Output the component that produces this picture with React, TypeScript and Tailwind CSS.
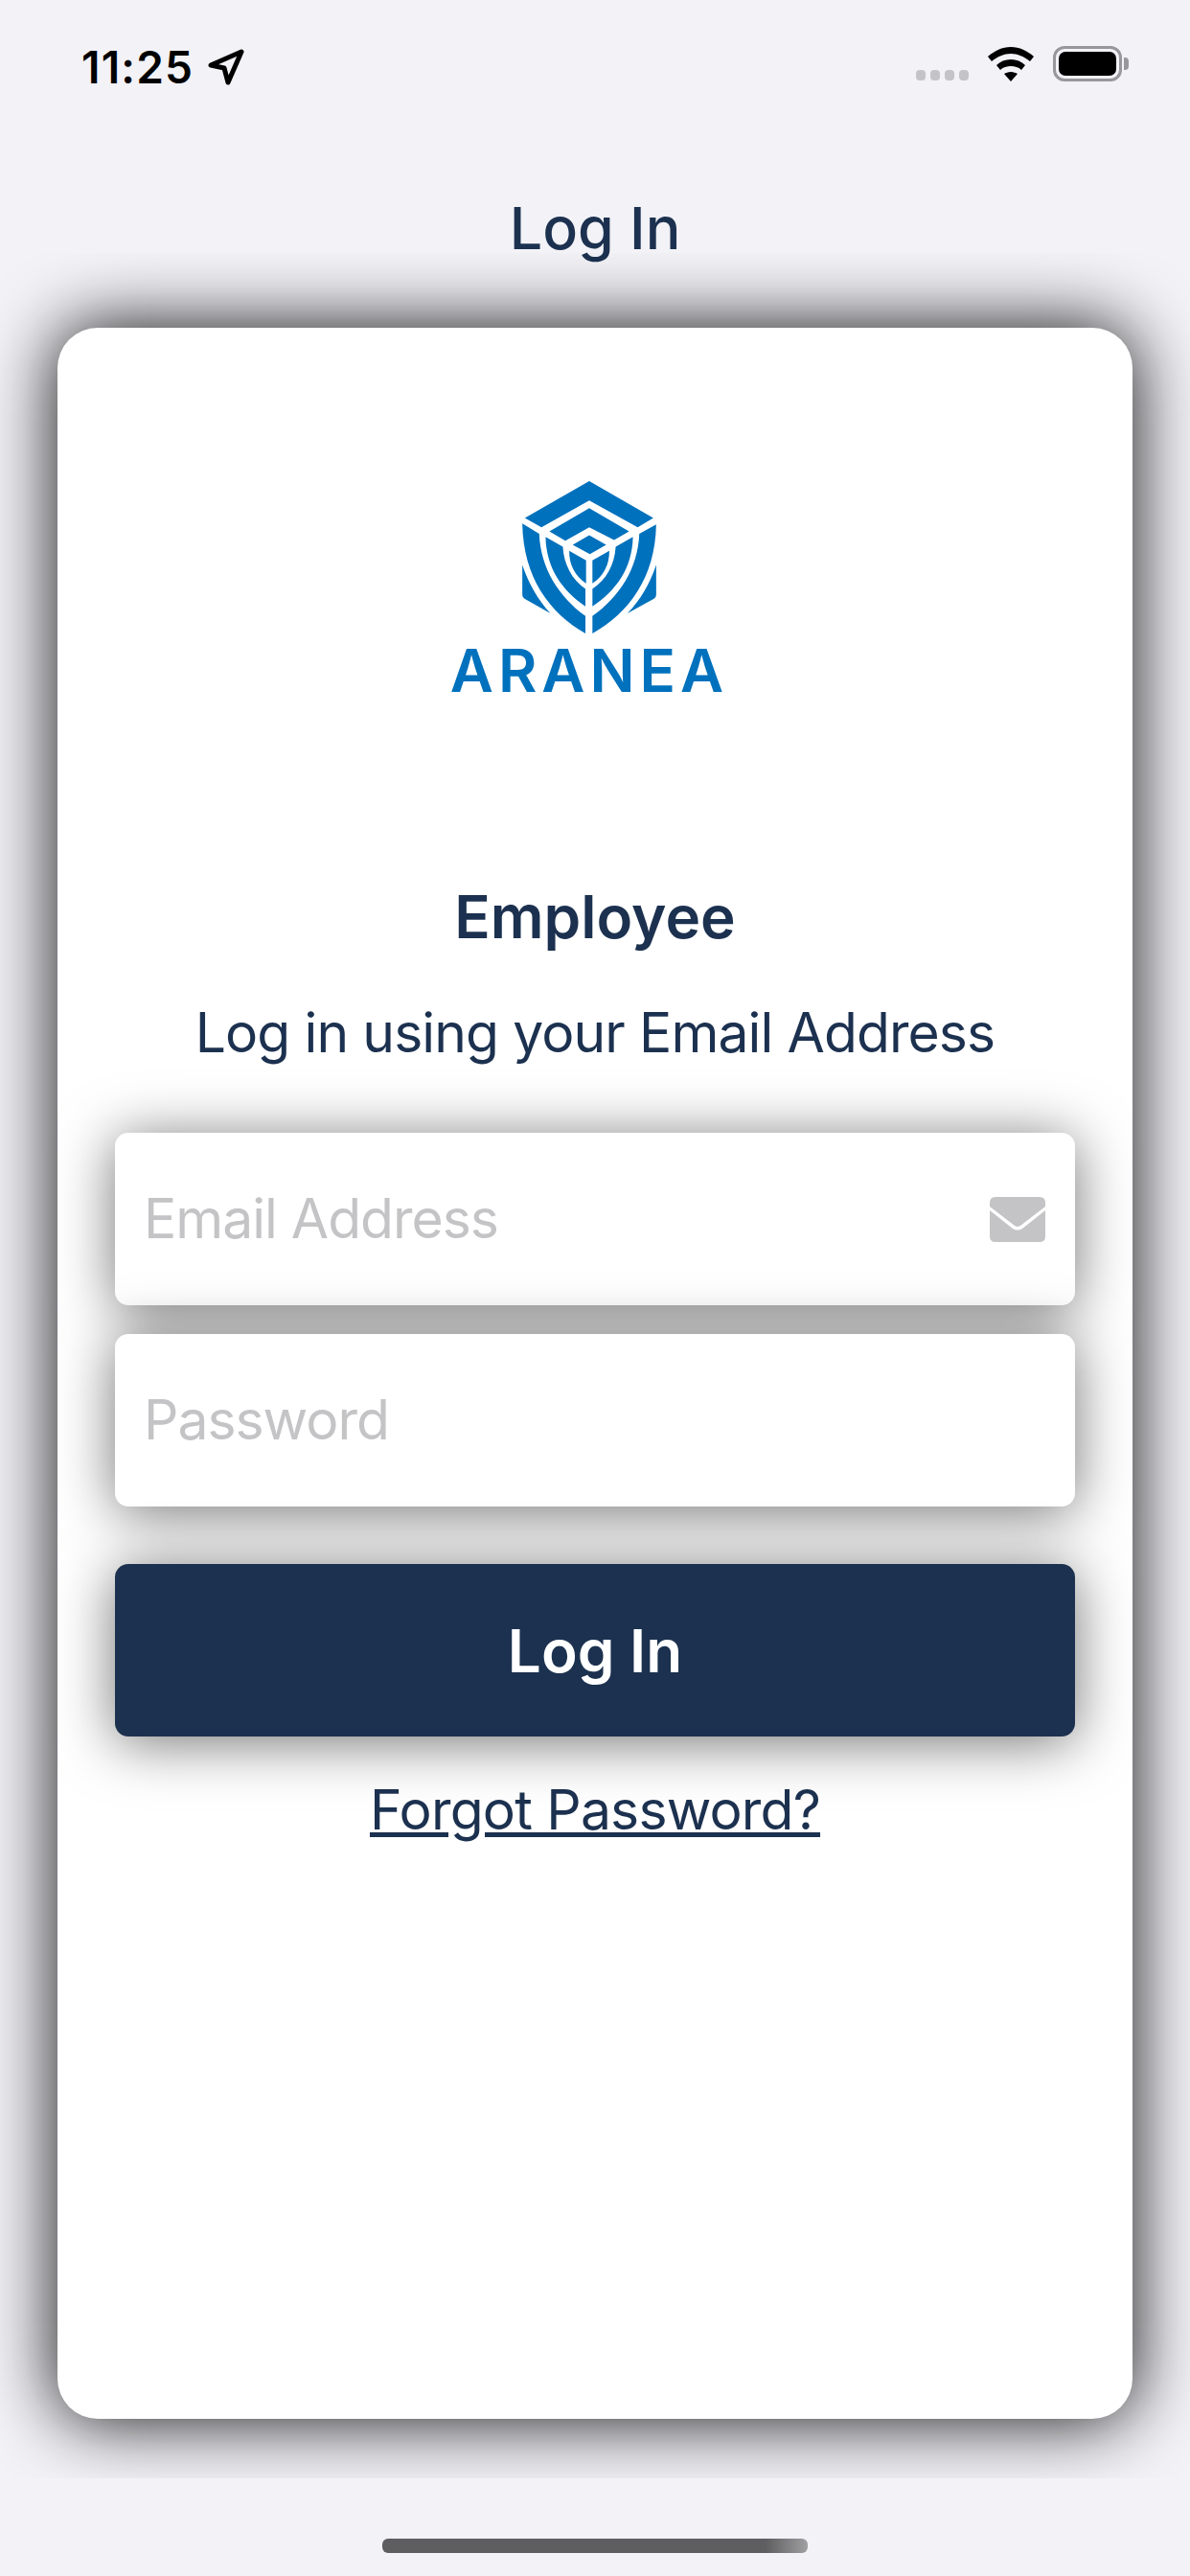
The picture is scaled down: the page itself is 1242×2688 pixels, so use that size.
import React from 'react';

const font = 'font-["Inter",_"Liberation_Sans",_sans-serif]';

const LogoMark = () => {
  return (
    <svg viewBox="315 67 420 478" className="w-[140px] h-[159px]" fill="#0071bd">
      <path d="M525 67 L726 183 L677 212 L525 128 L375 212 L323 183 Z" />
      <path d="M525 152 L650 225 L603 252 L525 212 L450 254 L400 225 Z" />
      <path d="M525 237 L578 267 L527 296 L473 267 Z" />
      <path d="M315 200 L368 232 C372 340 430 430 513 490 L513 545 C400 480 318 370 315 200 Z" />
      <path d="M735 203 L682 232 C678 340 620 430 535 490 L535 545 C650 480 732 370 735 203 Z" />
      <path d="M388 242 L442 273 C446 330 470 375 513 405 L513 460 C440 410 390 340 388 242 Z" />
      <path d="M662 242 L608 273 C604 330 580 375 535 405 L535 460 C610 410 660 340 662 242 Z" />
      <path d="M462 286 L515 316 L515 388 C480 365 462 330 462 286 Z" />
      <path d="M588 286 L535 316 L535 388 C570 365 588 330 588 286 Z" />
      <path d="M315 330 C335 390 365 440 403 482 L322 436 Q315 432 315 424 Z" />
      <path d="M735 330 C715 390 685 440 645 482 L728 436 Q735 432 735 424 Z" />
    </svg>
  );
};

const StatusBar = () => {
  return (
    <div className="h-[100px] shrink-0 pt-[48px] pl-[85px] pr-[64px] flex justify-between items-start">
      <div className="flex items-center">
        <span className="text-[46px] leading-[44px] font-semibold tracking-[1.2px] text-black">11:25</span>
        <svg viewBox="0 0 38 38" className="w-[38px] h-[38px] ml-[15px]" fill="none" stroke="#000" strokeWidth="5" strokeLinejoin="round">
          <path d="M3 17 L35 3 L21 35 L17 20 Z" />
        </svg>
      </div>
      <div className="flex items-end">
        <div className="flex gap-[5px] mb-[1px]">
          <div className="w-[10px] h-[11px] rounded-[4px] bg-[#c4c4c8]" />
          <div className="w-[10px] h-[11px] rounded-[4px] bg-[#c4c4c8]" />
          <div className="w-[10px] h-[11px] rounded-[4px] bg-[#c4c4c8]" />
          <div className="w-[10px] h-[11px] rounded-[4px] bg-[#c4c4c8]" />
        </div>
        <svg viewBox="0 0 48 36" className="w-[48px] h-[36px] ml-[20px]" fill="#000">
          <path d="M24 0 C33 0 41 4 48 10 L44 15 C38 10 31 7 24 7 C17 7 10 10 4 15 L0 10 C7 4 15 0 24 0 Z" />
          <path d="M24 13 C30 13 35 15 39 19 L35 24 C32 21 28 20 24 20 C20 20 16 21 13 24 L9 19 C13 15 18 13 24 13 Z" />
          <path d="M24 26 C27 26 29 27 31 28 L24 36 L17 28 C19 27 21 26 24 26 Z" />
        </svg>
        <div className="ml-[20px] w-[72px] h-[37px] rounded-[12px] border-[3px] border-[#98989c] p-[3px]">
          <div className="w-full h-full rounded-[7px] bg-black" />
        </div>
        <div className="w-[5px] h-[13px] rounded-r-[4px] bg-[#98989c] ml-[2px] mb-[12px]" />
      </div>
    </div>
  );
};

const Field = ({ label, icon }: { label: string; icon?: boolean }) => {
  return (
    <div className="h-[180px] rounded-[14px] bg-white shadow-[0_6px_60px_rgba(0,0,0,0.55)] pl-[30px] pr-[31px] flex items-center justify-between">
      <span className="text-[57px] tracking-[-1px] text-[#c4c4c6]">{label}</span>
      {icon && (
        <svg viewBox="0 0 58 47" className="w-[58px] h-[47px]" fill="#c4c4c6">
          <path d="M6 0 H52 Q58 0 58 6 V10 L32 30 Q29 32 26 30 L0 10 V6 Q0 0 6 0 Z" />
          <path d="M0 14 L24 33 Q29 36 34 33 L58 14 V41 Q58 47 52 47 H6 Q0 47 0 41 Z" />
        </svg>
      )}
    </div>
  );
};

export default function App() {
  return (
    <div className={`${font} w-[1242px] h-[2688px] bg-[#f2f2f7] flex flex-col`}>
      <StatusBar />
      <div className="h-[164px] shrink-0 pt-[100px] text-center text-[61px] leading-[76px] font-medium text-[#1c314f]">Log In</div>
      <div className="h-[2322px] shrink-0 overflow-hidden px-[60px] pt-[78px]">
        <div className="h-[2182px] rounded-[42px] bg-white shadow-[0_0_76px_rgba(0,0,0,0.95)] px-[60px] pt-[160px] flex flex-col">
          <div className="flex flex-col items-center mr-[12px]">
            <LogoMark />
            <span className="text-[62px] leading-[62px] mt-[8px] font-semibold tracking-[5px] text-[#0071bd]">ARANEA</span>
          </div>
          <h1 className="mt-[188px] text-center text-[62px] leading-[76px] font-semibold text-[#1c314f]">Employee</h1>
          <p className="mt-[47px] text-center text-[57px] leading-[72px] tracking-[-0.9px] text-[#1c314f]">Log in using your Email Address</p>
          <div className="mt-[68px] flex flex-col gap-[30px]">
            <Field label="Email Address" icon />
            <Field label="Password" />
          </div>
          <button className="mt-[60px] h-[180px] rounded-[14px] bg-[#1c314f] text-white text-[62px] font-semibold shadow-[0_6px_60px_rgba(0,0,0,0.55)]">Log In</button>
          <a className="mt-[41px] text-center text-[57px] leading-[72px] tracking-[-0.8px] text-[#1c314f] underline">Forgot Password?</a>
        </div>
      </div>
      <div className="flex-1 flex justify-center pt-[63px]">
        <div className="w-[444px] h-[15px] rounded-[6px] bg-linear-to-r from-[#5e5e60] via-[#5e5e60] via-90% to-[#a0a0a2]" />
      </div>
    </div>
  );
}
